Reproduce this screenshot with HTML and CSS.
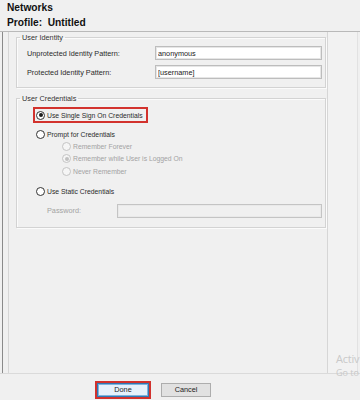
FILE: index.html
```html
<!DOCTYPE html>
<html lang="en">
<head>
    <meta charset="UTF-8">
    <meta name="viewport" content="width=device-width, initial-scale=1.0">
    <title>Networks - Profile</title>
    <link rel="stylesheet" href="styles.css">
</head>
<body>
    <div class="window">
        <div class="head">
            <div class="title">Networks</div>
            <div class="profile">Profile:&nbsp; Untitled</div>
        </div>

        <div class="main">
            <div class="content">
                <!-- Identity patterns -->
                <fieldset class="group">
                    <legend>User Identity</legend>
                    <div class="group-body identity">
                        <label for="unprot">Unprotected Identity Pattern:</label>
                        <input type="text" id="unprot" class="field" value="anonymous">
                        <label for="prot">Protected Identity Pattern:</label>
                        <input type="text" id="prot" class="field" value="[username]">
                    </div>
                </fieldset>

                <!-- Credentials -->
                <fieldset class="group">
                    <legend>User Credentials</legend>
                    <div class="group-body creds">
                        <div class="option highlight">
                            <span class="radio on"></span>
                            <span>Use Single Sign On Credentials</span>
                        </div>
                        <div class="option prompt">
                            <span class="radio"></span>
                            <span>Prompt for Credentials</span>
                        </div>
                        <div class="sub disabled">
                            <span class="radio"></span>
                            <span>Remember Forever</span>
                        </div>
                        <div class="sub disabled">
                            <span class="radio on"></span>
                            <span>Remember while User is Logged On</span>
                        </div>
                        <div class="sub disabled">
                            <span class="radio"></span>
                            <span>Never Remember</span>
                        </div>
                        <div class="option static">
                            <span class="radio"></span>
                            <span>Use Static Credentials</span>
                        </div>
                        <div class="password-row disabled">
                            <label for="pw">Password:</label>
                            <input type="password" id="pw" class="field" disabled>
                        </div>
                    </div>
                </fieldset>
            </div>
            <div class="side"></div>
        </div>

        <div class="foot">
            <span class="focus-ring"><button type="button" class="btn btn-default">Done</button></span>
            <button type="button" class="btn">Cancel</button>
        </div>

        <!-- OS watermark, only its left edge is visible -->
        <div class="watermark">
            <div class="wm-big">Activ</div>
            <div class="wm-small">Go to</div>
        </div>
    </div>
</body>
</html>
```

FILE: styles.css
```css
html, body {
    margin: 0;
    padding: 0;
}
body {
    font-family: "Liberation Sans", Arial, sans-serif;
    font-size: 7.3px;
    color: #2b2b2b;
    background-color: #f0f0f0;
}
.window {
    position: relative;
    width: 360px;
    height: 400px;
    overflow: hidden;
}
.head {
    height: 31px;
    padding-left: 7px;
    font-weight: bold;
    font-size: 10.2px;
    color: #111;
    line-height: 15px;
}
.main {
    display: flex;
    height: 342px;
    box-sizing: border-box;
    border-top: 1px solid #b9b9b9;
}
.main::before {
    content: "";
    width: 1px;
    margin-left: 2px;
    background-color: #8a8a8a;
}
.content {
    width: 311px;
    margin-left: 5px;
    border-left: 1px solid #d6d6d6;
    border-right: 1px solid #d6d6d6;
    padding-left: 7px;
}
.side {
    width: 29px;
    border-right: 1px solid #e2e2e2;
    background-color: #f2f2f2;
}
.group {
    width: 310px;
    box-sizing: border-box;
    margin: 1px 0 0 0;
    padding: 0;
    border: 1px solid #d3d3d3;
    box-shadow: inset 1px 1px 0 #fbfbfb, 1px 1px 0 #fbfbfb;
}
.group + .group {
    margin-top: 6px;
}
.group legend {
    margin-left: 3px;
    padding: 0 2px;
    line-height: 9px;
    color: #333;
}
.group-body.identity {
    display: grid;
    grid-template-columns: 128px 1fr;
    row-gap: 5px;
    align-items: center;
    padding: 4px 3px 8px 10px;
}
.field {
    height: 14px;
    box-sizing: border-box;
    margin: 0;
    padding: 0 2px;
    border: 1px solid #bdbdbd;
    box-shadow: inset 0 0 0 1px #e6e6e6;
    background-color: #fff;
    font-family: inherit;
    font-size: 7.3px;
    color: #222;
    outline: none;
}
.group-body.creds {
    padding: 4px 3px 9px 16px;
}
.option,
.sub {
    display: flex;
    align-items: center;
    gap: 2px;
    white-space: nowrap;
    font-size: 6.8px;
}
.option {
    height: 12px;
    padding-left: 3px;
}
.option.highlight {
    width: 115px;
    height: 16px;
    box-sizing: border-box;
    padding-left: 1px;
    border: 2px solid #d2322d;
}
.option.prompt {
    margin-top: 5px;
}
.option.static {
    margin-top: 8px;
}
.sub {
    height: 12.5px;
    padding-left: 29px;
}
.radio {
    flex: none;
    position: relative;
    width: 9px;
    height: 9px;
    box-sizing: border-box;
    border: 1px solid #333;
    border-radius: 50%;
    background-color: #fff;
}
.radio.on::after {
    content: "";
    position: absolute;
    inset: 1.5px;
    border-radius: 50%;
    background-color: #1e1e1e;
}
.disabled {
    color: #a3a3a3;
}
.disabled .radio {
    border-color: #c4c4c4;
    background-color: #f5f5f5;
}
.disabled .radio.on::after {
    background-color: #c0c0c0;
}
.password-row {
    display: flex;
    align-items: center;
    margin-top: 6px;
    padding-left: 14px;
}
.password-row label {
    width: 70px;
}
.password-row .field {
    flex: 1;
    background-color: #f0f0f0;
    border-color: #c4c4c4;
    box-shadow: inset 0 0 0 1px #e9e9e9;
}
.foot {
    display: flex;
    align-items: flex-start;
    height: 27px;
    box-sizing: border-box;
    border-top: 1px solid #dadada;
    padding: 7px 0 0 95px;
    gap: 10px;
}
.focus-ring {
    display: block;
    border: 2px solid #d2322d;
}
.btn {
    display: block;
    width: 50px;
    height: 14px;
    margin: 2px 0 0 0;
    padding: 0;
    border: 1px solid #adadad;
    background-color: #e1e1e1;
    font-family: inherit;
    font-size: 7.3px;
    color: #222;
    line-height: 12px;
}
.btn-default {
    width: 52px;
    margin: 0;
    border-color: #2f79b5;
    background-color: #e5f1fb;
    box-shadow: inset 0 0 0 1px #7fb3dc;
}
.watermark {
    position: absolute;
    left: 336px;
    top: 351px;
    color: #c9c9c9;
    white-space: nowrap;
    font-family: "Open Sans", "Liberation Sans", sans-serif;
}
.wm-big {
    font-size: 11px;
    letter-spacing: -0.2px;
    line-height: 15px;
}
.wm-small {
    font-size: 9px;
    line-height: 12px;
    margin-top: 1px;
}
```
